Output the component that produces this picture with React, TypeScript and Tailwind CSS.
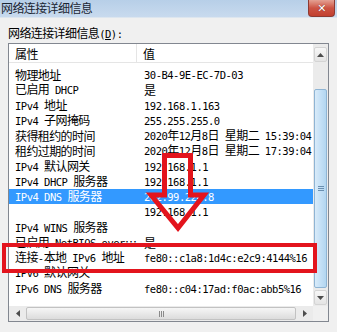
import React from "react";

type Row = [string, string];

const rows: Row[] = [
  ["物理地址", "30-B4-9E-EC-7D-03"],
  ["已启用 DHCP", "是"],
  ["IPv4 地址", "192.168.1.163"],
  ["IPv4 子网掩码", "255.255.255.0"],
  ["获得租约的时间", "2020年12月8日 星期二 15:39:04"],
  ["租约过期的时间", "2020年12月8日 星期二 17:39:04"],
  ["IPv4 默认网关", "192.168.1.1"],
  ["IPv4 DHCP 服务器", "192.168.1.1"],
  ["IPv4 DNS 服务器", "202.99.224.8"],
  ["", "192.168.1.1"],
  ["IPv4 WINS 服务器", ""],
  ["已启用 NetBIOS over Tcpip", "是"],
  ["连接-本地 IPv6 地址", "fe80::c1a8:1d4c:e2c9:4144%16"],
  ["IPv6 默认网关", ""],
  ["IPv6 DNS 服务器", "fe80::c04:17ad:f0ac:abb5%16"],
];

// latin bits look like simsun's narrow half-width glyphs, so they get their own font
const T = ({ s }: { s: string }) => (
  <>
    {s.split(/([\x20-\x7e]+)/).map((part, i) =>
      i % 2 === 1 ? (
        <span key={i} className="font-['DejaVu_Sans_Mono'] text-[10.5px] tracking-[-0.5px]">
          {part}
        </span>
      ) : (
        <span key={i}>{part}</span>
      )
    )}
  </>
);

const Tri = ({ dir }: { dir: "up" | "down" | "left" | "right" }) => {
  const pts = {
    up: "0,4 3.5,0 7,4",
    down: "0,0 3.5,4 7,0",
    left: "4,0 0,3.5 4,7",
    right: "0,0 4,3.5 0,7",
  }[dir];
  const w = dir === "up" || dir === "down" ? 7 : 4;
  const h = dir === "up" || dir === "down" ? 4 : 7;
  return (
    <svg width={w} height={h} viewBox={`0 0 ${w} ${h}`}>
      <polygon points={pts} fill="#4d4d4d" />
    </svg>
  );
};

const App = () => {
  return (
    <div className="relative h-[332px] w-[337px] overflow-hidden bg-[#f0f0f0] font-['Noto_Sans_CJK_SC',sans-serif] text-[12px] leading-[15px] tracking-[-0.6px] text-black">
      {/* title bar */}
      <div className="flex h-[18px] items-start border-b border-[#dde6ef] bg-gradient-to-b from-[#b7cfe8] to-[#c8daee]">
        <div className="pl-px leading-[16px] text-[#1b2633]">网络连接详细信息</div>
        <div className="ml-auto mr-[2px] flex h-[17px] w-[27px] items-center justify-center rounded-b-[4px] border border-t-0 border-[#8d3a32] bg-gradient-to-b from-[#e3a093] via-[#cc5344] to-[#c2402f]">
          <span className="font-['DejaVu_Sans'] text-[11px] font-bold leading-none text-white [text-shadow:0_0_1px_#5a1a12]">✕</span>
        </div>
      </div>

      <div className="px-[8px] pt-[8px]">
        <div className="h-[14px] leading-[14px]">
          网络连接详细信息<T s="(" />
          <span className="font-['DejaVu_Sans_Mono'] text-[10.5px] tracking-[-0.5px] underline">D</span>
          <T s="):" />
        </div>

        {/* list box */}
        <div className="mt-[3px] flex h-[279px] w-[321px] flex-col border border-[#828790] bg-white">
          <div className="flex h-[262px]">
            <div className="w-[304px] overflow-hidden">
              <div className="flex h-[19px] items-center border-b border-[#e5e5e5]">
                <div className="flex h-full w-[128px] items-center border-r border-[#e5e5e5] pl-[6px]">属性</div>
                <div className="pl-[6px]">值</div>
              </div>
              <div className="pt-[4px]">
                {rows.map(([k, v], i) => (
                  <div
                    key={i}
                    className={
                      i === 8
                        ? "flex h-[15.25px] items-center whitespace-nowrap bg-[#3399ff] text-white"
                        : "flex h-[15.25px] items-center whitespace-nowrap"
                    }
                  >
                    <div className="w-[128px] shrink-0 overflow-hidden text-ellipsis pl-[6px]">
                      <T s={k} />
                    </div>
                    <div className="pl-[7px]">
                      <T s={v} />
                    </div>
                  </div>
                ))}
              </div>
            </div>

            {/* vertical scrollbar */}
            <div className="flex w-[15px] flex-col bg-[#ebebeb]">
              <div className="mx-px mt-[3px] flex h-[15px] items-center justify-center rounded-[2px] border border-[#d4d4d4] bg-gradient-to-b from-[#f7f7f7] to-[#e4e4e4]">
                <Tri dir="up" />
              </div>
              <div className="flex flex-1 flex-col pb-[2px] pt-[27px]">
                <div className="mx-px flex flex-1 items-center justify-center rounded-[2px] border border-[#8eb4d4] bg-gradient-to-r from-[#d9ebf9] via-[#c4e0f6] to-[#b3d6f0]">
                  <div className="flex flex-col gap-px">
                    <div className="h-px w-[6px] bg-[#6a8fb0]" />
                    <div className="h-px w-[6px] bg-[#6a8fb0]" />
                    <div className="h-px w-[6px] bg-[#6a8fb0]" />
                  </div>
                </div>
              </div>
              <div className="mx-px mb-px flex h-[15px] items-center justify-center rounded-[2px] border border-[#d4d4d4] bg-gradient-to-b from-[#f7f7f7] to-[#e4e4e4]">
                <Tri dir="down" />
              </div>
            </div>
          </div>

          {/* horizontal scrollbar */}
          <div className="flex h-[15px] bg-[#ebebeb]">
            <div className="flex w-[304px]">
              <div className="my-px flex w-[17px] items-center justify-center">
                <Tri dir="left" />
              </div>
              <div className="my-px flex flex-1 items-center justify-center rounded-[2px] border border-[#c2c2c2] bg-gradient-to-b from-[#f6f6f6] to-[#dcdcdc]">
                <div className="flex gap-px">
                  <div className="h-[6px] w-px bg-[#8a8a8a]" />
                  <div className="h-[6px] w-px bg-[#8a8a8a]" />
                  <div className="h-[6px] w-px bg-[#8a8a8a]" />
                </div>
              </div>
              <div className="my-px flex w-[17px] items-center justify-center">
                <Tri dir="right" />
              </div>
            </div>
            <div className="w-[15px] bg-[#f0f0f0]" />
          </div>
        </div>
      </div>

      {/* red annotation: arrow + box */}
      <svg className="pointer-events-none absolute inset-0" width="337" height="332" viewBox="0 0 337 332">
        <polygon
          points="164.5,155.5 190.5,155.5 190.5,195 204,195 178,228 151,195 164.5,195"
          fill="none"
          stroke="#e3141d"
          strokeWidth="5"
        />
        <rect x="4" y="245" width="311" height="26" fill="none" stroke="#e3141d" strokeWidth="4" />
      </svg>
    </div>
  );
};

export default App;
